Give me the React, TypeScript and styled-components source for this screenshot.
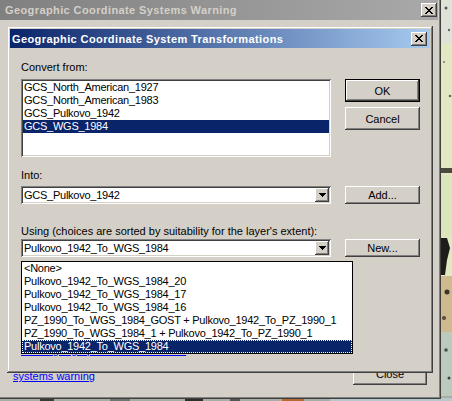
import React from "react";
import styled, { createGlobalStyle, css } from "styled-components";

const GlobalStyle = createGlobalStyle`
  html, body { margin: 0; padding: 0; }
  body { width: 452px; height: 401px; overflow: hidden; background: #e3e7c2; }
  *, *::before, *::after { box-sizing: border-box; }
`;

const FACE = "#d4d0c8";

const raised = css`
  background: ${FACE};
  box-shadow:
    inset -1px -1px 0 #404040,
    inset 1px 1px 0 #ffffff,
    inset -2px -2px 0 #808080,
    inset 2px 2px 0 ${FACE};
`;

const windowFrame = css`
  background: ${FACE};
  box-shadow:
    inset -1px -1px 0 #404040,
    inset 1px 1px 0 ${FACE},
    inset -2px -2px 0 #808080,
    inset 2px 2px 0 #ffffff;
`;

const sunken = css`
  background: #ffffff;
  box-shadow:
    inset 1px 1px 0 #808080,
    inset -1px -1px 0 #ffffff,
    inset 2px 2px 0 #404040,
    inset -2px -2px 0 ${FACE};
`;

const Desktop = styled.div`
  position: relative;
  width: 452px;
  height: 401px;
  overflow: hidden;
  font-family: "Liberation Sans", Arial, sans-serif;
  font-size: 11px;
  color: #000;
`;

const MapPicture = styled.svg`
  position: absolute;
  left: 0;
  top: 0;
  display: block;
`;

const OuterWindow = styled.div`
  ${windowFrame}
  position: absolute;
  left: -3px;
  top: -3px;
  width: 444px;
  height: 402px;
  padding: 3px;
  display: flex;
  flex-direction: column;
`;

const InnerDialog = styled.div`
  ${windowFrame}
  position: absolute;
  left: 7px;
  top: 26px;
  width: 426px;
  height: 347px;
  padding: 3px;
  display: flex;
  flex-direction: column;
  z-index: 2;
`;

const TitleBar = styled.div<{ $active?: boolean }>`
  flex: none;
  height: ${(p) => (p.$active ? 19 : 20)}px;
  display: flex;
  align-items: center;
  justify-content: space-between;
  padding: ${(p) => (p.$active ? "0 3px 0 2px" : "0 1px 0 5px")};
  font-weight: bold;
  font-size: 11px;
  letter-spacing: 0.4px;
  white-space: nowrap;
  color: ${(p) => (p.$active ? "#ffffff" : "#d4d0c8")};
  background: ${(p) =>
    p.$active
      ? "linear-gradient(to right, #0a246a, #a6caf0)"
      : "linear-gradient(to right, #808080, #a9a9a9)"};
`;

const CaptionButton = styled.div`
  ${raised}
  width: 16px;
  height: 14px;
  display: flex;
  align-items: center;
  justify-content: center;
  padding-right: 1px;
`;

const OuterBody = styled.div`
  flex: 1;
  display: flex;
  align-items: flex-end;
  justify-content: space-between;
  padding: 0 11px 11px 13px;
`;

const HelpLink = styled.a<{ $area?: string }>`
  grid-area: ${(p) => p.$area ?? "auto"};
  color: #0000ff;
  text-decoration: underline;
  line-height: 13px;
  white-space: nowrap;
  cursor: pointer;
`;

const WarningLink = styled(HelpLink)`
  margin-bottom: 2px;
`;

const PushButton = styled.button<{ $default?: boolean; $w?: number; $h?: number; $area?: string }>`
  ${raised}
  grid-area: ${(p) => p.$area ?? "auto"};
  width: ${(p) => p.$w ?? 75}px;
  height: ${(p) => p.$h ?? 23}px;
  border: ${(p) => (p.$default ? "1px solid #000000" : "none")};
  padding: 0;
  font: inherit;
  color: #000;
  display: flex;
  align-items: center;
  justify-content: center;
`;

const DialogBody = styled.div`
  flex: 1;
  display: grid;
  grid-template-columns: 310px 75px;
  column-gap: 14px;
  grid-template-rows: 13px 5px 78px 12px 13px 4px 18px 21px 13px 1px 18px 87px 13px;
  grid-template-areas:
    "from ."
    ". ."
    "list actions"
    ". ."
    "into ."
    ". ."
    "target add"
    ". ."
    "using ."
    ". ."
    "method new"
    ". ."
    "about .";
  padding: 13px 0 0 11px;
`;

const FieldLabel = styled.div<{ $area: string }>`
  grid-area: ${(p) => p.$area};
  line-height: 13px;
  white-space: nowrap;
`;

const ListBox = styled.div`
  ${sunken}
  grid-area: list;
  padding: 2px;
  overflow: hidden;
`;

const ListRow = styled.div<{ $selected?: boolean }>`
  height: 13px;
  line-height: 13px;
  padding-left: 1px;
  letter-spacing: -0.25px;
  white-space: nowrap;
  background: ${(p) => (p.$selected ? "#0a246a" : "transparent")};
  color: ${(p) => (p.$selected ? "#ffffff" : "#000000")};
`;

const ActionStack = styled.div`
  grid-area: actions;
  display: flex;
  flex-direction: column;
  gap: 5px;
`;

const Combo = styled.div<{ $area: string }>`
  ${sunken}
  grid-area: ${(p) => p.$area};
  position: relative;
  display: flex;
  align-items: stretch;
  padding: 2px;
  height: 18px;
`;

const ComboText = styled.div`
  flex: 1;
  padding-left: 1px;
  line-height: 14px;
  letter-spacing: -0.25px;
  white-space: nowrap;
`;

const ArrowButton = styled.div`
  ${raised}
  width: 14px;
  display: flex;
  align-items: center;
  justify-content: center;
`;

const DropList = styled.div`
  position: absolute;
  left: 0;
  top: 22px;
  width: 332px;
  border: 1px solid #000000;
  background: #ffffff;
  z-index: 3;
`;

const DropRow = styled(ListRow)`
  padding-left: 2px;
  outline: ${(p) => (p.$selected ? "1px dotted #ffffff" : "none")};
  outline-offset: -1px;
`;

const CloseGlyph = () => (
  <svg width="8" height="7" viewBox="0 0 8 7" shapeRendering="crispEdges">
    <path
      d="M0 0h2v1h-2z M6 0h2v1h-2z M1 1h2v1h-2z M5 1h2v1h-2z M2 2h4v1h-4z M3 3h2v1h-2z M2 4h4v1h-4z M1 5h2v1h-2z M5 5h2v1h-2z M0 6h2v1h-2z M6 6h2v1h-2z"
      fill="#000"
    />
  </svg>
);

const DownArrow = () => (
  <svg width="7" height="4" viewBox="0 0 7 4" shapeRendering="crispEdges">
    <path d="M0 0h7v1h-7z M1 1h5v1h-5z M2 2h3v1h-3z M3 3h1v1h-1z" fill="#000" />
  </svg>
);

const MapBackdrop = () => (
  <MapPicture width="452" height="401" viewBox="0 0 452 401">
    <rect width="452" height="401" fill="#e3e7c2" />
    <rect x="436" y="0" width="16" height="44" fill="#dfe2d6" />
    <circle cx="446" cy="8" r="1.5" fill="#555" />
    <circle cx="449" cy="30" r="1.2" fill="#666" />
    <circle cx="444" cy="62" r="1" fill="#777" />
    <circle cx="450" cy="96" r="1.3" fill="#6a6a5a" />
    <rect x="436" y="168" width="16" height="5" fill="#4b4a3c" />
    <rect x="436" y="175" width="16" height="62" fill="#dce6bc" />
    <path d="M436 238 h11 l3 10 -3 12 -2 15 h-9z" fill="#1e1d1a" />
    <rect x="436" y="276" width="16" height="56" fill="#cfb98e" />
    <circle cx="447" cy="292" r="2.5" fill="#3a3428" />
    <circle cx="444" cy="318" r="2" fill="#5a4a32" />
    <rect x="436" y="332" width="16" height="69" fill="#bccabe" />
    <circle cx="446" cy="350" r="1.8" fill="#4a5048" />
    <circle cx="449" cy="378" r="1.5" fill="#3c4440" />
    <rect x="0" y="396" width="452" height="5" fill="#a8aea6" />
    <rect x="40" y="398" width="14" height="3" fill="#3a3a36" />
    <rect x="110" y="398" width="20" height="3" fill="#707470" />
    <rect x="185" y="398" width="18" height="3" fill="#2e2e2a" />
    <rect x="230" y="398" width="10" height="3" fill="#555" />
    <rect x="282" y="398" width="22" height="3" fill="#b86a36" />
    <rect x="330" y="398" width="122" height="3" fill="#b6c8cc" />
  </MapPicture>
);

const fromItems = ["GCS_North_American_1927", "GCS_North_American_1983", "GCS_Pulkovo_1942", "GCS_WGS_1984"];

const methodItems = [
  "<None>",
  "Pulkovo_1942_To_WGS_1984_20",
  "Pulkovo_1942_To_WGS_1984_17",
  "Pulkovo_1942_To_WGS_1984_16",
  "PZ_1990_To_WGS_1984_GOST + Pulkovo_1942_To_PZ_1990_1",
  "PZ_1990_To_WGS_1984_1 + Pulkovo_1942_To_PZ_1990_1",
  "Pulkovo_1942_To_WGS_1984",
];

export default function App() {
  return (
    <Desktop>
      <GlobalStyle />
      <MapBackdrop />

      <OuterWindow>
        <TitleBar>
          <span>Geographic Coordinate Systems Warning</span>
          <CaptionButton>
            <CloseGlyph />
          </CaptionButton>
        </TitleBar>
        <OuterBody>
          <WarningLink>systems warning</WarningLink>
          <PushButton $w={74}>Close</PushButton>
        </OuterBody>
      </OuterWindow>

      <InnerDialog>
        <TitleBar $active>
          <span>Geographic Coordinate System Transformations</span>
          <CaptionButton>
            <CloseGlyph />
          </CaptionButton>
        </TitleBar>
        <DialogBody>
          <FieldLabel $area="from">Convert from:</FieldLabel>
          <ListBox>
            {fromItems.map((item) => (
              <ListRow key={item} $selected={item === "GCS_WGS_1984"}>
                {item}
              </ListRow>
            ))}
          </ListBox>
          <ActionStack>
            <PushButton $default>OK</PushButton>
            <PushButton>Cancel</PushButton>
          </ActionStack>

          <FieldLabel $area="into">Into:</FieldLabel>
          <Combo $area="target">
            <ComboText>GCS_Pulkovo_1942</ComboText>
            <ArrowButton>
              <DownArrow />
            </ArrowButton>
          </Combo>
          <PushButton $area="add" $h={18}>Add...</PushButton>

          <FieldLabel $area="using">Using (choices are sorted by suitability for the layer's extent):</FieldLabel>
          <Combo $area="method">
            <ComboText>Pulkovo_1942_To_WGS_1984</ComboText>
            <ArrowButton>
              <DownArrow />
            </ArrowButton>
            <DropList>
              {methodItems.map((item) => (
                <DropRow key={item} $selected={item === "Pulkovo_1942_To_WGS_1984"}>
                  {item}
                </DropRow>
              ))}
            </DropList>
          </Combo>
          <PushButton $area="new" $h={18}>New...</PushButton>

          <HelpLink $area="about">About geographic transformations</HelpLink>
        </DialogBody>
      </InnerDialog>
    </Desktop>
  );
}
